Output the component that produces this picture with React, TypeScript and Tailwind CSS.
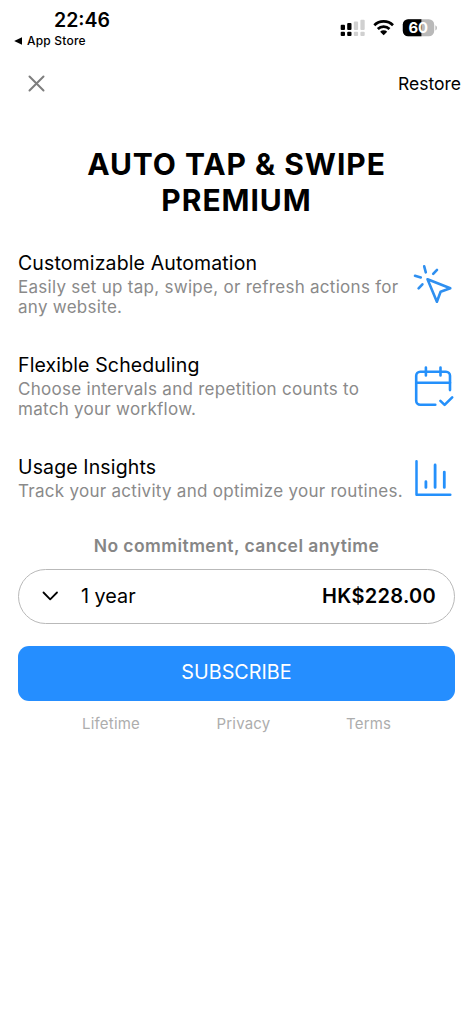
import type { ReactNode } from "react";

const FEATURES: { title: string; lines: string[]; icon: ReactNode }[] = [
  {
    title: "Customizable Automation",
    lines: ["Easily set up tap, swipe, or refresh actions for", "any website."],
    icon: <TapIcon />,
  },
  {
    title: "Flexible Scheduling",
    lines: ["Choose intervals and repetition counts to", "match your workflow."],
    icon: <CalendarIcon />,
  },
  {
    title: "Usage Insights",
    lines: ["Track your activity and optimize your routines."],
    icon: <ChartIcon />,
  },
];

function TapIcon() {
  return (
    <svg
      className="h-[60px] w-[73px]"
      viewBox="0 4.5 73 60"
      fill="none"
      stroke="#2e8ff0"
      strokeWidth="2.6"
      strokeLinecap="round"
      strokeLinejoin="round"
    >
      <path d="M27.5 28.8L50.3 37.8L40.6 41.3L36.9 51.2Z" />
      <path d="M24.2 15.8L25.8 21.8M15 25.3L20.8 26.9M37 19.4L33.2 23.4M22.4 33.8L18.6 37.8" />
    </svg>
  );
}

function CalendarIcon() {
  return (
    <svg
      className="h-[60px] w-[73px]"
      viewBox="0 1.5 73 60"
      fill="none"
      stroke="#2490fb"
      strokeWidth="2.6"
      strokeLinecap="round"
      strokeLinejoin="round"
    >
      <path d="M35.3 49.3H20.2a4 4 0 0 1-4-4V20.3a4 4 0 0 1 4-4H46a4 4 0 0 1 4 4V34.6" />
      <path d="M16.2 27.2H50M25.9 12V20M40.5 12V20" />
      <path d="M40.4 45.4L44.6 49.4L52.2 41.8" />
    </svg>
  );
}

function ChartIcon() {
  return (
    <svg
      className="h-[60px] w-[73px]"
      viewBox="0 -1.5 73 60"
      fill="none"
      stroke="#2490fb"
      strokeWidth="2.5"
      strokeLinecap="round"
      strokeLinejoin="round"
    >
      <path d="M16.5 10.7V44.2H50.3" />
      <path d="M25.9 31.2V36.9M35.1 14.4V36.9M44.3 21.6V36.9" strokeWidth="2.8" />
    </svg>
  );
}

function StatusIcons() {
  return (
    <svg className="h-[24px] w-[100px]" viewBox="338 16 100 24">
      {/* dual SIM signal */}
      <g fill="#000">
        <rect x="340.7" y="24.7" width="4.3" height="5.3" rx="1" />
        <rect x="347.2" y="23" width="4.3" height="7" rx="1" />
        <rect x="340.7" y="31.7" width="4.3" height="4.3" rx="1" />
        <rect x="347.2" y="31.7" width="4.3" height="4.3" rx="1" />
      </g>
      <g fill="#d0d0d0">
        <rect x="353.8" y="21.4" width="4.3" height="8.6" rx="1" />
        <rect x="360.4" y="19.7" width="4.3" height="10.3" rx="1" />
        <rect x="353.8" y="31.7" width="4.3" height="4.3" rx="1" />
        <rect x="360.4" y="31.7" width="4.3" height="4.3" rx="1" />
      </g>
      {/* wifi */}
      <g fill="none" stroke="#000" strokeWidth="2.7">
        <path d="M374.3 25.2A13.4 13.4 0 0 1 393 25.2" />
        <path d="M377.8 29A8.4 8.4 0 0 1 389.5 29" />
      </g>
      <path d="M383.65 35.2L380.1 31.7A5 5 0 0 1 387.2 31.7Z" fill="#000" />
      {/* battery */}
      <clipPath id="battery">
        <rect x="402.8" y="19.3" width="31.4" height="17" rx="5.3" />
      </clipPath>
      <g clipPath="url(#battery)">
        <rect x="402" y="19" width="33" height="18" fill="#b9b9b9" />
        <rect x="402" y="19" width="19.4" height="18" fill="#000" />
      </g>
      <path d="M435.4 25.2a3.1 3.1 0 0 1 0 5.4z" fill="#b9b9b9" />
      <text
        x="418.2"
        y="33.1"
        textAnchor="middle"
        fill="#fff"
        fontFamily="Inter, sans-serif"
        fontSize="14.8"
        fontWeight="700"
      >
        60
      </text>
    </svg>
  );
}

export default function App() {
  return (
    <div className="h-[1024px] w-[473px] overflow-hidden bg-white font-['Inter',sans-serif] text-black">
      <header className="flex h-[60px] justify-between pr-[35px] pl-[14px]">
        <div className="pt-[8px]">
          <div className="pl-[40px] text-[19.5px] leading-[24px] font-semibold">22:46</div>
          <div className="flex h-[18px] items-center gap-[4px]">
            <svg className="h-[8px] w-[9px]" viewBox="0 0 9 8">
              <path d="M0.2 4L8 0.2V7.8Z" fill="#000" />
            </svg>
            <span className="text-[12px] leading-[18px] font-medium tracking-[0.2px]">App Store</span>
          </div>
        </div>
        <div className="pt-[16px]">
          <StatusIcons />
        </div>
      </header>

      <nav className="flex h-[46px] items-center justify-between pr-[12px] pl-[28px]">
        <button type="button" aria-label="Close">
          <svg
            className="h-[17px] w-[17px]"
            viewBox="0 0 17 17"
            stroke="#7e7e7e"
            strokeWidth="2"
            strokeLinecap="round"
          >
            <path d="M1.5 1.5L15.5 15.5M15.5 1.5L1.5 15.5" />
          </svg>
        </button>
        <button type="button" className="pt-[2px] text-[17.5px] leading-[24px]">
          Restore
        </button>
      </nav>

      <h1 className="mt-[40px] text-center text-[30px] leading-[36px] font-bold tracking-[0.95px]">
        AUTO TAP &amp; SWIPE
        <br />
        PREMIUM
      </h1>

      <section className="mt-[32px] flex flex-col gap-[33px] pl-[18px]">
        {FEATURES.map((feature) => (
          <div key={feature.title} className="flex items-center">
            <div className="w-[382px] shrink-0 whitespace-nowrap">
              <h2 className="text-[19.5px] leading-[26px] tracking-[0.13px]">{feature.title}</h2>
              <p className="pt-[1px] pb-[2px] text-[17px] leading-[20px] tracking-[0.28px] text-[#8a8a8a]">
                {feature.lines.map((line) => (
                  <span key={line} className="block">
                    {line}
                  </span>
                ))}
              </p>
            </div>
            <div className="-my-2 shrink-0">{feature.icon}</div>
          </div>
        ))}
      </section>

      <section className="mt-[31px] px-[18px]">
        <p className="text-center text-[17.5px] leading-[24px] font-semibold tracking-[0.45px] text-[#868686]">
          No commitment, cancel anytime
        </p>
        <button
          type="button"
          className="mt-[11px] flex h-[55px] w-full items-center rounded-full border border-[#b9b9b9] pr-[18px] pb-[2px] pl-[23px]"
        >
          <svg
            className="h-[10px] w-[17px]"
            viewBox="0 0 17 10"
            fill="none"
            stroke="#000"
            strokeWidth="1.8"
            strokeLinecap="round"
            strokeLinejoin="round"
          >
            <path d="M1.5 1.5L8.2 8.3L15 1.5" />
          </svg>
          <span className="ml-[22px] text-[19.8px] leading-[24px]">1 year</span>
          <span className="ml-auto text-[20px] leading-[24px] font-semibold tracking-[0.3px]">
            HK$228.00
          </span>
        </button>
        <button
          type="button"
          className="mt-[22px] flex h-[55px] w-full items-center justify-center rounded-[11px] bg-[#258eff] pb-[2px] text-[19.8px] text-white"
        >
          SUBSCRIBE
        </button>
        <div className="mt-[13px] flex text-[15px] leading-[20px] tracking-[0.2px] text-[#adadad]">
          <span className="ml-[64px]">Lifetime</span>
          <span className="ml-[76.5px]">Privacy</span>
          <span className="ml-[75.5px]">Terms</span>
        </div>
      </section>
    </div>
  );
}
